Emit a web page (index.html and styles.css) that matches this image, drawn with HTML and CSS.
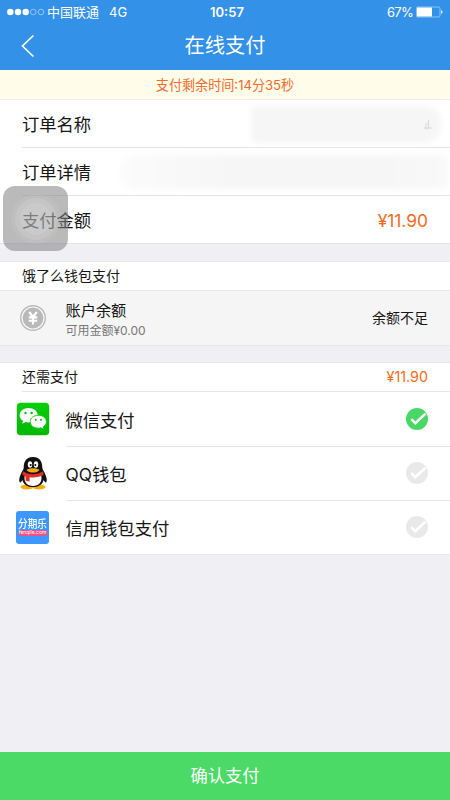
FILE: index.html
```html
<!DOCTYPE html>
<html lang="zh-CN">
<head>
<meta charset="utf-8">
<title>在线支付</title>
<link rel="stylesheet" href="styles.css">
</head>
<body>
<div class="app">
  <header class="header">
    <div class="status">
      <div class="carrier">
        <svg class="signal" width="38" height="8" viewBox="0 0 38 8"><g fill="#fff"><circle cx="3.3" cy="4" r="3.2"/><circle cx="11" cy="4" r="3.2"/><circle cx="18.7" cy="4" r="3.2"/></g><g fill="none" stroke="#b5daf8" stroke-width=".7"><circle cx="26.3" cy="4" r="2.8"/><circle cx="34" cy="4" r="2.8"/></g></svg>
        <span>中国联通</span><span class="network">4G</span>
      </div>
      <span class="clock">10:57</span>
      <div class="power"><span>67%</span>
        <svg width="27" height="12" viewBox="0 0 27 12"><rect x=".5" y="1" width="23.5" height="10" rx="1.2" fill="none" stroke="#9fd0f7" stroke-width=".8"/><path d="M1 1.5h15v9H1z" fill="#fff"/><path d="M25 4q1.6.4 1.6 2T25 8z" fill="#d5eafb"/></svg>
      </div>
    </div>
    <div class="nav">
      <svg class="back" width="14" height="24" viewBox="0 0 14 24"><path d="M12.4 1.5 1.5 12l10.9 10.5" fill="none" stroke="#fff" stroke-width="1.7"/></svg>
      <h1>在线支付</h1>
    </div>
  </header>
  <div class="notice">支付剩余时间:14分35秒</div>
  <section class="order">
    <div class="row"><span>订单名称</span><i class="smudge smudge-name"></i><svg class="remnant" width="9" height="12" viewBox="0 0 9 12"><path d="M4.500 1v9M1 5h4M0 9h8M2 6v5" fill="none" stroke="#d8d8d8"/></svg></div>
    <div class="row"><span>订单详情</span><i class="smudge smudge-detail"></i></div>
    <div class="row total"><span>支付金额</span><span class="price">¥11.90</span></div>
  </section>
  <section class="wallet">
    <div class="section-title">饿了么钱包支付</div>
    <div class="balance">
      <svg class="coin" width="28" height="28" viewBox="0 0 28 28"><circle cx="14" cy="14" r="12.3" fill="#f8f8f8" stroke="#b9b9b9" stroke-width="1.4"/><circle cx="14" cy="14" r="10.4" fill="#b9b9b9"/><path d="m10.2 8 3.8 5 3.8-5M9.8 13.4h8.4M9.8 16.7h8.4M14 13v7.5" fill="none" stroke="#fff" stroke-width="2.1"/></svg>
      <div class="account"><div class="account-name">账户余额</div><div class="available">可用金额¥0.00</div></div>
      <span class="insufficient">余额不足</span>
    </div>
  </section>
  <section class="methods">
    <div class="section-title due-title"><span>还需支付</span><span class="due">¥11.90</span></div>
    <div class="method">
      <svg class="logo" width="34" height="34" viewBox="0 0 34 34"><defs><linearGradient id="wx" x2="0" y2="1"><stop stop-color="#09ce0b"/><stop offset="1" stop-color="#04b806"/></linearGradient></defs><rect x=".8" y=".8" width="32.4" height="32.4" rx="4" fill="url(#wx)"/><path d="M12.6 6C7.5 6 3.6 9.2 3.6 13.2c0 2.4 1.3 4.3 3.4 5.6l-.9 3 3.5-1.8c1 .3 2 .4 3 .4 5.2 0 9.1-3.1 9.1-7.2S17.7 6 12.6 6z" fill="#fff"/><path d="M22.3 13.3c-4.6 0-8.1 2.7-8.1 6.4s3.5 6.5 8.1 6.5c1 0 1.9-.1 2.7-.4l3 1.7-.8-2.7c2-1.2 3.2-3 3.2-5.1 0-3.7-3.6-6.4-8.1-6.4z" fill="#fff" stroke="#08c509" stroke-width=".9"/><g fill="#09bd0b"><circle cx="9.5" cy="11" r="1.2"/><circle cx="15.6" cy="11" r="1.2"/><circle cx="19.7" cy="17.7" r="1"/><circle cx="25" cy="17.7" r="1"/></g></svg>
      <span class="method-name">微信支付</span>
      <svg class="check check-on" width="24" height="24" viewBox="0 0 24 24"><circle cx="12" cy="12" r="11"/><path d="m6.3 12.2 4 4L20.5 6.7"/></svg>
    </div>
    <div class="method">
      <svg class="logo" width="34" height="34" viewBox="0 0 34 34"><ellipse cx="11" cy="31" rx="6.5" ry="2.4" fill="#f8ac0b"/><ellipse cx="23" cy="31" rx="6.5" ry="2.4" fill="#f8ac0b"/><path d="M17 1C10.5 1 7.5 5.6 7.7 12c-.2 2-1.7 3-2.4 5-1.7 3.8-2.8 7.3-1.6 9.3.8.9 2.2-1.4 2.8-2.4.8 4.6 5 7.1 10.5 7.1s9.7-2.5 10.5-7.1c.6 1 2 3.3 2.8 2.4 1.2-2 .1-5.5-1.6-9.3-.7-2-2.200-3-2.400-5C26.500 5.600 23.500 1 17 1z" fill="#111"/><path d="M8.800 19c-1.500 7.600 2.500 11 8.200 11s9.700-3.400 8.200-11c-5 2.300-11.400 2.300-16.400 0z" fill="#fff"/><ellipse cx="14" cy="8.500" rx="2.200" ry="3.200" fill="#fff"/><ellipse cx="20" cy="8.500" rx="2.200" ry="3.200" fill="#fff"/><circle cx="14.700" cy="9" r="1"/><circle cx="19.300" cy="9" r="1"/><path d="M10.500 13.700c2.500-2.100 10.500-2.100 13 0-2 3.800-11 3.800-13 0z" fill="#f5a817"/><path d="M7 15.200c6 4 14 4 20 0l.7 3.600c-4.100 2.300-9.200 3-14.100 2.400v4.200l-3.900-.4-.2-4.700-3.200-1.600z" fill="#e22c26"/></svg>
      <span class="method-name">QQ钱包</span>
      <svg class="check" width="24" height="24" viewBox="0 0 24 24"><circle cx="12" cy="12" r="11"/><path d="m6.3 12.2 4 4L20.5 6.7"/></svg>
    </div>
    <div class="method">
      <div class="logo fenqile"><span class="brand">分期乐</span><span class="domain">fenqile.com</span></div>
      <span class="method-name">信用钱包支付</span>
      <svg class="check" width="24" height="24" viewBox="0 0 24 24"><circle cx="12" cy="12" r="11"/><path d="m6.3 12.2 4 4L20.5 6.7"/></svg>
    </div>
  </section>
  <button class="confirm">确认支付</button>
  <div class="assistive"><i class="ring"></i></div>
</div>
</body>
</html>
```
FILE: styles.css
```css
* { box-sizing: border-box; }
body { margin: 0; }
.app {
  position: relative;
  display: flex;
  flex-direction: column;
  width: 450px;
  height: 800px;
  overflow: hidden;
  background: #efeff4;
  color: #161616;
  font-family: Inter, "Noto Sans CJK SC", sans-serif;
  font-size: 17.3px;
}
.header { height: 70px; background: #3391e8; color: #fff; }
.status {
  display: grid;
  grid-template-columns: 1fr auto 1fr;
  align-items: center;
  height: 24px;
  padding: 0 7px;
  font-size: 13px;
  line-height: 24px;
}
.carrier { display: flex; align-items: center; }
.signal { margin-right: 2px; }
.network { margin-left: 10px; }
.clock { padding-left: 4px; font-weight: 600; }
.power { display: flex; align-items: center; justify-content: flex-end; gap: 3px; }
.power span { font-size: 13px; letter-spacing: -.7px; }
.nav { display: grid; grid-template-columns: 50px 1fr 50px; align-items: center; height: 43px; }
.back { margin-left: 21px; }
.nav h1 { margin: 0; text-align: center; font-size: 20.3px; font-weight: 400; line-height: 43px; }
.notice {
  height: 30px;
  border-bottom: 1px solid #ededed;
  background: #fffdea;
  color: #ef6b2b;
  text-align: center;
  font-size: 13.1px;
  line-height: 30px;
}
.order { height: 144px; padding-left: 22px; background: #fff; border-bottom: 1px solid #e3e3e7; }
.row {
  position: relative;
  display: flex;
  align-items: center;
  justify-content: space-between;
  height: 48px;
  padding: 2px 22px 0 0;
  border-bottom: 1px solid #e4e4e4;
  line-height: 45px;
}
.row:last-child { border-bottom: 0; }
.row.total { padding-top: 0; }
.smudge { position: absolute; filter: blur(3px); background: #f6f6f6; }
.smudge-name { left: 229px; top: 6px; width: 190px; height: 37px; border-radius: 5px 16px 16px 5px; }
.smudge-detail { left: 98px; top: 7px; width: 328px; height: 34px; border-radius: 20px 4px 4px 16px; background: linear-gradient(90deg, #fbfbfb, #f6f6f6 35%, #f6f6f6 80%, #f9f9f9); }
.remnant { position: relative; margin-right: -5px; }
.price { color: #ef6b20; font-size: 17.4px; }
.wallet { margin-top: 17px; border-bottom: 1px solid #e6e6eb; background: #fff; border-top: 1px solid #e7e7eb; }
.section-title {
  display: flex;
  justify-content: space-between;
  height: 28px;
  padding: 0 22px;
  font-size: 14px;
  line-height: 28px;
}
.balance {
  display: flex;
  align-items: center;
  height: 55px;
  padding: 0 22px 0 19px;
  border-top: 1px solid #e7e7e9;
  background: #f5f5f5;
}
.coin { margin-bottom: 1px; }
.account { flex: 1; margin-left: 18.5px; padding-top: 4px; }
.account-name { font-size: 15.2px; line-height: 20px; }
.available { color: #777; font-size: 12px; line-height: 19px; }
.insufficient { margin-bottom: 2px; font-size: 14px; }
.methods { margin-top: 16px; border-top: 1px solid #e7e7eb; border-bottom: 1px solid #e7e7eb; background: #fff; }
.due-title { height: 28px; }
.due { color: #f36c17; font-size: 14.3px; }
.method { display: flex; align-items: center; height: 54px; padding: 0 0 0 16px; position: relative; }
.method-name {
  display: flex;
  align-items: center;
  flex: 1;
  align-self: stretch;
  margin-left: 15.5px;
  border-top: 1px solid #e5e5e5;
}
.due-title + .method {
  height: 55px;
  padding-left: 0;
  margin-left: 22px;
  border-top: 1px solid #e5e5e5;
}
.due-title + .method .logo { margin-left: -6px; }
.due-title + .method .method-name { border-top: 0; }
.check {
  position: absolute;
  right: 21px;
  fill: #e9e9e9;
}
.check path { fill: none; stroke: #fff; stroke-width: 2.5; }
.check-on { fill: #49d766; }
.logo { flex: none; }
.fenqile {
  display: flex;
  flex-direction: column;
  align-items: center;
  justify-content: center;
  width: 33px;
  height: 33px;
  margin-right: 1px;
  border-radius: 3px;
  background: #3c97ff;
  color: #fff;
}
.brand { font-size: 9.6px; font-weight: 500; line-height: 11px; transform: scaleY(1.2); }
.domain { width: 28px; height: 6px; margin-top: 1px; border-radius: 1px; background: #f05283; font-size: 5px; line-height: 5.5px; text-align: center; }
.confirm {
  height: 48px;
  margin-top: auto;
  padding: 0;
  border: 0;
  background: #4cda66;
  color: #fff;
  font: inherit;
  line-height: 48px;
}
.assistive {
  position: absolute;
  left: 3px;
  top: 186px;
  display: grid;
  place-items: center;
  width: 65px;
  height: 65px;
  border-radius: 12px;
  background: rgba(132, 132, 132, .56);
}
.ring {
  width: 32px;
  height: 32px;
  border-radius: 50%;
  background: rgba(255, 255, 255, .24);
  box-shadow: 0 0 0 5px rgba(255, 255, 255, .11), 0 0 0 9px rgba(255, 255, 255, .07);
}
```
